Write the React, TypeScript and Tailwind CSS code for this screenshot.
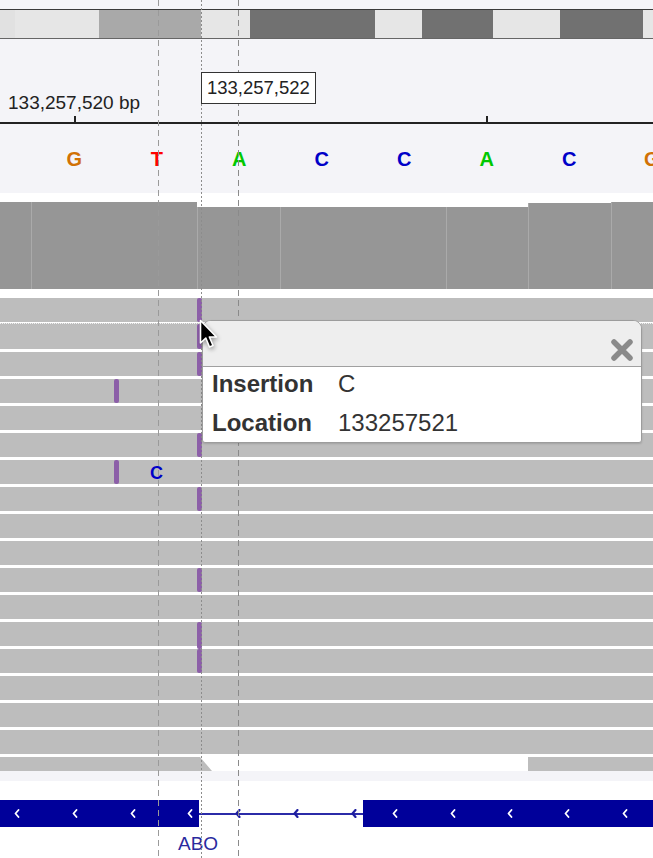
import React from 'react';

const ideogram = [
  { w: 15, c: 'bg-[#e1e1e1]' },
  { w: 84, c: 'bg-[#e6e6e6]' },
  { w: 102, c: 'bg-[#a9a9a9]' },
  { w: 49, c: 'bg-[#e6e6e6]' },
  { w: 125, c: 'bg-[#717171]' },
  { w: 47, c: 'bg-[#e6e6e6]' },
  { w: 71, c: 'bg-[#717171]' },
  { w: 67, c: 'bg-[#e6e6e6]' },
  { w: 83, c: 'bg-[#717171]' },
  { w: 10, c: 'bg-[#e6e6e6]' },
];

const bases = [
  { b: 'G', c: 'text-[#d17105]' },
  { b: 'T', c: 'text-[#ff0000]' },
  { b: 'A', c: 'text-[#00c800]' },
  { b: 'C', c: 'text-[#0000c8]' },
  { b: 'C', c: 'text-[#0000c8]' },
  { b: 'A', c: 'text-[#00c800]' },
  { b: 'C', c: 'text-[#0000c8]' },
  { b: 'G', c: 'text-[#d17105]' },
];

// coverage bars: width, height
const coverage = [
  { w: 31, h: 'h-[87px]' },
  { w: 166, h: 'h-[87px]' },
  { w: 83, h: 'h-[82px]' },
  { w: 166, h: 'h-[82px]' },
  { w: 82, h: 'h-[82px]' },
  { w: 83, h: 'h-[86px]' },
  { w: 42, h: 'h-[87px]' },
];

// insertion markers per read row
const reads: { marks: { x: number; tall?: boolean }[]; label?: boolean }[] = [
  { marks: [{ x: 197 }] },
  { marks: [{ x: 197 }] },
  { marks: [{ x: 197 }] },
  { marks: [{ x: 114 }] },
  { marks: [] },
  { marks: [{ x: 197 }] },
  { marks: [{ x: 114 }], label: true },
  { marks: [{ x: 197 }] },
  { marks: [] },
  { marks: [] },
  { marks: [{ x: 197 }] },
  { marks: [] },
  { marks: [{ x: 197, tall: true }] },
  { marks: [{ x: 197 }] },
  { marks: [] },
  { marks: [] },
  { marks: [] },
];

const blockChevrons = [17, 75, 133, 190];
const intronChevrons = [39, 97, 155];
const rightChevrons = [32, 90, 147, 204, 262];

function Chevron({ color, bold }: { color: string; bold?: boolean }) {
  return (
    <svg width="6" height="9" viewBox="0 0 6 9" fill="none">
      <path d="M4.5 1L1.5 4.5L4.5 8" stroke={color} strokeWidth={bold ? 2.2 : 1.8} strokeLinecap="round" strokeLinejoin="round" />
    </svg>
  );
}

function GuideLines() {
  return (
    <div className="pointer-events-none absolute inset-0">
      <div className="absolute top-0 bottom-0 left-[158px] w-px bg-[linear-gradient(to_bottom,#9a9a9a_60%,transparent_60%)] bg-[length:1px_10px]" />
      <div className="absolute top-0 bottom-0 left-[201px] w-px bg-[linear-gradient(to_bottom,#8c8c8c_50%,transparent_50%)] bg-[length:1px_4px]" />
      <div className="absolute top-0 bottom-0 left-[238px] w-px bg-[linear-gradient(to_bottom,#8a8a8a_60%,transparent_60%)] bg-[length:1px_10px]" />
    </div>
  );
}

export default function App() {
  return (
    <div className="relative w-[653px] h-[858px] overflow-hidden bg-white font-['Liberation_Sans',Arial,Helvetica,sans-serif]">
      <div className="flex flex-col">
        {/* top strip + ideogram */}
        <div className="h-[9px] bg-[#f4f4f8]" />
        <div className="flex h-[30px] border-t border-b border-[#3a3a3a] border-b-[#666]">
          {ideogram.map((s, i) => (
            <div key={i} className={`${s.c} h-full shrink-0`} style={{ width: s.w }} />
          ))}
        </div>

        {/* ruler */}
        <div className="relative h-[85px] bg-[#f4f4f8] flex flex-col justify-end">
          <div className="pl-[8px] pb-[10px] text-[19px] leading-none text-[#222]">133,257,520 bp</div>
          <div className="relative h-[2px] bg-[#222]">
            <div className="absolute left-[74px] bottom-0 w-[2px] h-[8px] bg-[#222]" />
            <div className="absolute left-[486px] bottom-0 w-[2px] h-[8px] bg-[#222]" />
          </div>
        </div>

        {/* sequence */}
        <div className="h-[69px] bg-[#f4f4f8] flex items-center pl-[33px] overflow-hidden">
          {bases.map((b, i) => (
            <div key={i} className={`w-[82.5px] shrink-0 text-center text-[20px] font-bold leading-none ${b.c}`}>
              {b.b}
            </div>
          ))}
        </div>

        {/* coverage */}
        <div className="h-[96px] bg-white flex items-end">
          {coverage.map((c, i) => (
            <div
              key={i}
              className={`${c.h} shrink-0 bg-[#969696] ${i > 0 ? 'border-l border-[#aaaaaa]' : ''}`}
              style={{ width: c.w }}
            />
          ))}
        </div>
        <div className="h-[9px] bg-white" />

        {/* alignments */}
        <div className="flex flex-col gap-[3px] bg-white">
          {reads.map((r, i) => (
            <div
              key={i}
              className={`relative h-[24px] bg-[#bdbdbd] ${i === 1 ? 'border-t border-dotted border-[#f0f0f0] -mt-[2px] h-[26px]' : ''}`}
            >
              {r.marks.map((m, j) => (
                <div
                  key={j}
                  className={`absolute top-0 w-[5px] rounded-[2px] bg-[#8c5fa8] ${m.tall ? 'h-[27px]' : 'h-full'}`}
                  style={{ left: m.x }}
                />
              ))}
              {r.label && (
                <span className="absolute left-[150px] top-[4px] text-[18px] font-bold leading-none text-[#0000c8]">C</span>
              )}
            </div>
          ))}
          <div className="flex h-[14px] bg-white">
            <div className="w-[200px] bg-[#bdbdbd]" />
            <svg width="12" height="14" viewBox="0 0 12 14" className="shrink-0">
              <polygon points="0,0 0,14 12,14" fill="#bdbdbd" />
            </svg>
            <div className="w-[316px]" />
            <div className="flex-1 bg-[#bdbdbd]" />
          </div>
        </div>
        <div className="h-[10px] bg-[#f4f4f8]" />

        {/* gene track */}
        <div className="pt-[19px]">
          <div className="flex h-[27px]">
            <div className="relative w-[199px] shrink-0 bg-[#00009a]">
              {blockChevrons.map((x) => (
                <div key={x} className="absolute top-[9px]" style={{ left: x - 3 }}>
                  <Chevron color="#ffffff" />
                </div>
              ))}
            </div>
            <div className="relative w-[164px] shrink-0 flex items-center">
              <div className="h-[2px] w-full bg-[#2b2ba8]" />
              {intronChevrons.map((x) => (
                <div key={x} className="absolute top-[9px]" style={{ left: x - 3 }}>
                  <Chevron color="#1e1ea0" bold />
                </div>
              ))}
            </div>
            <div className="relative flex-1 bg-[#00009a]">
              {rightChevrons.map((x) => (
                <div key={x} className="absolute top-[9px]" style={{ left: x - 3 }}>
                  <Chevron color="#ffffff" />
                </div>
              ))}
            </div>
          </div>
          <div className="pl-[178px] pt-[7px] text-[19px] leading-none text-[#2a2a9e]">ABO</div>
        </div>
      </div>

      <GuideLines />

      {/* position tooltip on ruler */}
      <div className="absolute left-[201px] top-[72px] h-[32px] px-[5px] flex items-center bg-white border border-[#333] text-[18.5px] leading-none text-[#222]">
        133,257,522
      </div>

      {/* popup */}
      <div className="absolute left-[202px] top-[320px] w-[440px] h-[123px] rounded-t-[9px] rounded-b-[3px] border border-[#9c9c9c] bg-white overflow-hidden shadow-[0_1px_2px_rgba(0,0,0,0.15)]">
        <div className="h-[46px] bg-[#eeeeee] border-b border-[#a0a0a0] flex items-end justify-end pr-[7px] pb-[4px]">
          <svg width="24" height="24" viewBox="0 0 24 24">
            <path d="M4 4L20 20M20 4L4 20" stroke="#8a8a8a" strokeWidth="5.5" strokeLinecap="round" />
          </svg>
        </div>
        <div className="pl-[9px] -mt-[3px] text-[24px] text-[#333] leading-[39px]">
          <div className="flex">
            <span className="w-[126px] font-bold">Insertion</span>
            <span>C</span>
          </div>
          <div className="flex">
            <span className="w-[126px] font-bold">Location</span>
            <span>133257521</span>
          </div>
        </div>
      </div>

      {/* mouse cursor */}
      <svg className="absolute left-[199px] top-[319px] pointer-events-none drop-shadow-[1px_2px_2px_rgba(0,0,0,0.35)]" width="20" height="32" viewBox="0 0 20 32">
        <path d="M1.5 1.5L1.5 24L6.8 19L10.5 28L14 26.5L10.4 18L17.5 18Z" fill="#000" stroke="#fff" strokeWidth="1.6" strokeLinejoin="round" />
      </svg>
    </div>
  );
}
